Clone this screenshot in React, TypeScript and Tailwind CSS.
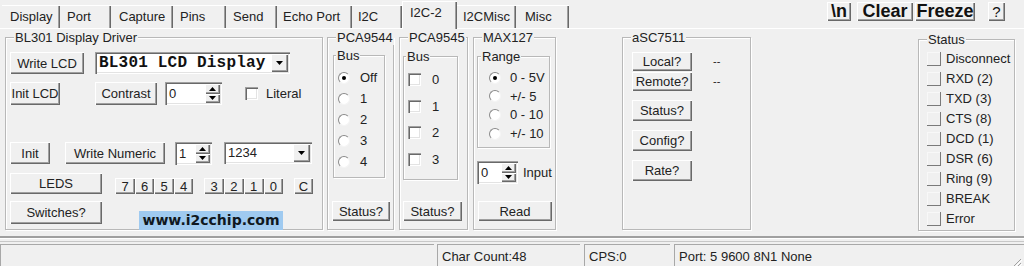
import React from "react";

const raised =
  "bg-[#f0f0f0] shadow-[inset_1px_1px_0_#ffffff,inset_-1px_-1px_0_#696969,inset_-2px_-2px_0_#a0a0a0]";
const sunken =
  "bg-white shadow-[inset_1px_1px_0_#a0a0a0,inset_2px_2px_0_#696969,inset_-1px_-1px_0_#ffffff,inset_-2px_-2px_0_#e3e3e3]";

type P = { className?: string; children?: React.ReactNode };

function Btn({ className = "", children }: P) {
  return (
    <div className={`flex shrink-0 items-center justify-center leading-[15px] ${raised} ${className}`}>
      {children}
    </div>
  );
}

function Group({
  label,
  className = "",
  labelClass = "left-[8px]",
  children,
}: P & { label: string; labelClass?: string }) {
  return (
    <div
      className={`relative shrink-0 border border-[#b8b8b8] shadow-[inset_1px_1px_0_#ffffff,1px_1px_0_#ffffff] ${className}`}
    >
      <span className={`absolute -top-[8px] whitespace-nowrap bg-[#f0f0f0] px-px leading-[15px] ${labelClass}`}>
        {label}
      </span>
      {children}
    </div>
  );
}

function DownTri() {
  return (
    <svg width="7" height="4" viewBox="0 0 7 4">
      <path d="M0 0h7L3.5 4z" fill="#000" />
    </svg>
  );
}
function UpTri() {
  return (
    <svg width="7" height="4" viewBox="0 0 7 4">
      <path d="M0 4h7L3.5 0z" fill="#000" />
    </svg>
  );
}

function Combo({ className = "", text, textClass = "" }: P & { text: string; textClass?: string }) {
  return (
    <div className={`flex shrink-0 items-center p-[2px] ${sunken} ${className}`}>
      <span className={`flex-1 whitespace-nowrap pl-[2px] ${textClass}`}>{text}</span>
      <div className={`flex h-full w-[17px] items-center justify-center ${raised}`}>
        <DownTri />
      </div>
    </div>
  );
}

function Spin({ className = "", value }: P & { value: string }) {
  return (
    <div className={`flex shrink-0 items-center p-[2px] ${sunken} ${className}`}>
      <span className="flex-1 pl-[2px] leading-[15px]">{value}</span>
      <div className="flex h-full w-[15px] flex-col">
        <div className={`flex flex-1 items-center justify-center ${raised}`}>
          <UpTri />
        </div>
        <div className={`flex flex-1 items-center justify-center ${raised}`}>
          <DownTri />
        </div>
      </div>
    </div>
  );
}

function Radio({ checked = false }: { checked?: boolean }) {
  return (
    <div className="flex h-[12px] w-[12px] shrink-0 items-center justify-center rounded-full border border-t-[#8a8a8a] border-l-[#8a8a8a] border-r-[#f4f4f4] border-b-[#f4f4f4] bg-white">
      {checked && <div className="h-[4px] w-[4px] rounded-full bg-black" />}
    </div>
  );
}

function Check() {
  return <div className={`h-[13px] w-[13px] shrink-0 ${sunken}`} />;
}

function Led() {
  return (
    <div className="h-[14px] w-[14px] shrink-0 bg-[#f0f0f0] shadow-[inset_-1px_-1px_0_#7a7a7a,inset_1px_1px_0_#f8f8f8]" />
  );
}

const tabs: { label: string; w: string; pl: string }[] = [
  { label: "Display", w: "w-[58px]", pl: "pl-[8px]" },
  { label: "Port", w: "w-[51px]", pl: "pl-[7px]" },
  { label: "Capture", w: "w-[62px]", pl: "pl-[8px]" },
  { label: "Pins", w: "w-[53px]", pl: "pl-[7px]" },
  { label: "Send", w: "w-[51px]", pl: "pl-[7px]" },
  { label: "Echo Port", w: "w-[75px]", pl: "pl-[6px]" },
  { label: "I2C", w: "w-[50px]", pl: "pl-[6px]" },
];
const tabs2: { label: string; w: string; pl: string }[] = [
  { label: "I2CMisc", w: "w-[59px]", pl: "pl-[6px]" },
  { label: "Misc", w: "w-[53px]", pl: "pl-[9px]" },
];

const tabCls =
  "flex h-[23px] shrink-0 items-center whitespace-nowrap bg-[#f0f0f0] shadow-[inset_0_1px_0_#ffffff,inset_-1px_0_0_#696969,inset_-2px_0_0_#a0a0a0]";

const statusItems = [
  "Disconnect",
  "RXD (2)",
  "TXD (3)",
  "CTS (8)",
  "DCD (1)",
  "DSR (6)",
  "Ring (9)",
  "BREAK",
  "Error",
];

export default function App() {
  return (
    <div className="h-[266px] w-[1024px] overflow-hidden bg-[#f0f0f0] text-[13px] text-[#222222] [font-family:Liberation_Sans,Arial,sans-serif]">
      {/* Top bar: tabs + buttons */}
      <div className="flex h-[28px] items-end">
        <div className="flex items-end pl-[2px]">
          {tabs.map((t) => (
            <div key={t.label} className={`${tabCls} ${t.w} ${t.pl}`}>
              {t.label}
            </div>
          ))}
          <div className="mb-[-1px] flex h-[28px] w-[55px] shrink-0 items-start bg-[#f0f0f0] pl-[8px] pt-[4px] leading-[15px] shadow-[inset_1px_1px_0_#ffffff,inset_-1px_0_0_#696969,inset_-2px_0_0_#a0a0a0]">
            I2C-2
          </div>
          {tabs2.map((t) => (
            <div key={t.label} className={`${tabCls} ${t.w} ${t.pl}`}>
              {t.label}
            </div>
          ))}
        </div>
        <div className="flex-1" />
        <div className="mb-[7px] flex items-center text-[18px] font-bold leading-[19px] text-[#111111]">
          <Btn className="h-[19px] w-[24px]">\n</Btn>
          <Btn className="ml-[6px] h-[19px] w-[56px]">Clear</Btn>
          <Btn className="ml-[2px] h-[19px] w-[60px]">Freeze</Btn>
          <Btn className="ml-[13px] mr-[19px] h-[19px] w-[17px] text-[15px] font-normal">?</Btn>
        </div>
      </div>

      {/* Tab page */}
      <div className="flex h-[208px] items-start border-t border-white pl-[5px] pt-[8px]">
        {/* BL301 */}
        <Group label="BL301 Display Driver" className="h-[193px] w-[318px]">
          <div className="flex flex-col">
            <div className="mt-[14px] flex items-start">
              <Btn className="ml-[4px] h-[22px] w-[74px]">Write LCD</Btn>
              <Combo
                className="ml-[11px] h-[22px] w-[195px]"
                text="BL301 LCD Display"
                textClass="text-[16px] font-bold tracking-[0.2px] text-[#111111] [font-family:Liberation_Mono,Courier_New,monospace]"
              />
            </div>
            <div className="mt-[8px] flex items-start">
              <Btn className="ml-[4px] h-[23px] w-[50px]">Init LCD</Btn>
              <Btn className="ml-[35px] h-[23px] w-[62px]">Contrast</Btn>
              <Spin className="ml-[8px] h-[23px] w-[57px]" value="0" />
              <div className="ml-[23px] mt-[4px] flex items-center">
                <Check />
                <span className="ml-[8px] leading-[15px]">Literal</span>
              </div>
            </div>
            <div className="mt-[37px] flex items-start">
              <Btn className="ml-[4px] h-[22px] w-[40px]">Init</Btn>
              <Btn className="ml-[15px] h-[22px] w-[100px]">Write Numeric</Btn>
              <Spin className="ml-[10px] h-[23px] w-[37px]" value="1" />
              <Combo className="ml-[12px] h-[22px] w-[88px]" text="1234" />
            </div>
            <div className="mt-[8px] flex items-start">
              <Btn className="ml-[4px] h-[21px] w-[92px]">LEDS</Btn>
              <div className="ml-[13px] mt-[5px] flex">
                {["7", "6", "5", "4"].map((d, i) => (
                  <Btn key={d} className={`h-[16px] ${i % 2 === 0 ? "w-[20px]" : "w-[19px]"}`}>
                    {d}
                  </Btn>
                ))}
              </div>
              <div className="ml-[11px] mt-[5px] flex">
                {["3", "2", "1", "0"].map((d, i) => (
                  <Btn key={d} className={`h-[16px] ${i % 2 === 0 ? "w-[20px]" : "w-[19.5px]"}`}>
                    {d}
                  </Btn>
                ))}
              </div>
              <Btn className="ml-[11px] mt-[5px] h-[16px] w-[19px]">C</Btn>
            </div>
            <div className="mt-[7px] flex items-start">
              <Btn className="ml-[4px] h-[23px] w-[92px]">Switches?</Btn>
              <div className="ml-[37px] mt-[10px] flex h-[19px] w-[144px] items-center justify-center bg-[#9fcaf0] text-[14px] font-bold leading-[19px] text-[#101820] [font-family:DejaVu_Sans,Verdana,sans-serif]">
                www.i2cchip.com
              </div>
            </div>
          </div>
        </Group>

        {/* PCA9544 */}
        <Group label="PCA9544" className="ml-[4px] h-[193px] w-[67px]">
          <div className="flex flex-col">
            <Group label="Bus" labelClass="left-[2px]" className="ml-[5px] mt-[17px] h-[123px] w-[52px]">
              <div className="mt-[14px] flex flex-col gap-[6px]">
                {["Off", "1", "2", "3", "4"].map((l, i) => (
                  <div key={l} className="ml-[4px] flex h-[15px] items-center">
                    <Radio checked={i === 0} />
                    <span className="ml-[10px] leading-[15px]">{l}</span>
                  </div>
                ))}
              </div>
            </Group>
            <Btn className="ml-[4px] mt-[23px] h-[20px] w-[58px]">Status?</Btn>
          </div>
        </Group>

        {/* PCA9545 */}
        <Group label="PCA9545" className="ml-[5px] h-[193px] w-[69px]">
          <div className="flex flex-col">
            <Group label="Bus" labelClass="left-[2px]" className="ml-[3px] mt-[18px] h-[124px] w-[55px]">
              <div className="mt-[15px] flex flex-col gap-[11.6px]">
                {["0", "1", "2", "3"].map((l) => (
                  <div key={l} className="ml-[4px] flex h-[15px] items-center">
                    <Check />
                    <span className="ml-[11px] leading-[15px]">{l}</span>
                  </div>
                ))}
              </div>
            </Group>
            <Btn className="ml-[3px] mt-[21px] h-[20px] w-[59px]">Status?</Btn>
          </div>
        </Group>

        {/* MAX127 */}
        <Group label="MAX127" className="ml-[5px] h-[193px] w-[83px]">
          <div className="flex flex-col">
            <Group label="Range" labelClass="left-[3px]" className="ml-[3px] mt-[18px] h-[92px] w-[73px]">
              <div className="mt-[13px] flex flex-col gap-[3.7px]">
                {["0 - 5V", "+/- 5", "0 - 10", "+/- 10"].map((l, i) => (
                  <div key={l} className="ml-[11px] flex h-[15px] items-center">
                    <Radio checked={i === 0} />
                    <span className="ml-[9px] whitespace-nowrap leading-[15px]">{l}</span>
                  </div>
                ))}
              </div>
            </Group>
            <div className="ml-[3px] mt-[13px] flex items-center">
              <Spin className="h-[23px] w-[41px]" value="0" />
              <span className="ml-[5px] leading-[15px]">Input</span>
            </div>
            <Btn className="ml-[4px] mt-[17px] h-[20px] w-[74px]">Read</Btn>
          </div>
        </Group>

        {/* aSC7511 */}
        <Group label="aSC7511" className="ml-[66px] h-[193px] w-[129px]">
          <div className="flex flex-col">
            <div className="mt-[14px] flex items-center">
              <Btn className="ml-[9px] h-[19px] w-[60px]">Local?</Btn>
              <span className="ml-[21px] text-[11px] leading-[15px]">--</span>
            </div>
            <div className="mt-px flex items-center">
              <Btn className="ml-[9px] h-[19px] w-[60px]">Remote?</Btn>
              <span className="ml-[21px] text-[11px] leading-[15px]">--</span>
            </div>
            <Btn className="ml-[9px] mt-[9px] h-[21px] w-[60px]">Status?</Btn>
            <Btn className="ml-[9px] mt-[9px] h-[21px] w-[60px]">Config?</Btn>
            <Btn className="ml-[9px] mt-[9px] h-[21px] w-[60px]">Rate?</Btn>
          </div>
        </Group>

        {/* Status */}
        <Group label="Status" className="ml-[167px] mt-[2px] h-[192px] w-[97px]">
          <div className="mt-[11px] flex flex-col gap-[5px]">
            {statusItems.map((s) => (
              <div key={s} className="ml-[8px] flex h-[15px] items-center">
                <Led />
                <span className="ml-[5px] whitespace-nowrap leading-[15px]">{s}</span>
              </div>
            ))}
          </div>
        </Group>
      </div>

      {/* Status bar */}
      <div className="h-[3px] border-t-2 border-b border-t-[#a0a0a0] border-b-white" />
      <div className="mt-[2px] flex h-[27px] border-t border-[#c8c8c8] pt-[2px]">
        <div className="h-full w-[434px] border-l border-t border-[#a8a8a8]" />
        <div className="ml-[3px] flex h-full w-[143px] items-center border-l border-t border-[#a8a8a8] pl-[4px]">
          Char Count:48
        </div>
        <div className="ml-[4px] flex h-full w-[86px] items-center border-l border-t border-[#a8a8a8] pl-[4px]">
          CPS:0
        </div>
        <div className="ml-[4px] flex h-full flex-1 items-center justify-between border-l border-t border-[#a8a8a8] pl-[4px]">
          <span>Port: 5 9600 8N1 None</span>
          <svg width="11" height="11" viewBox="0 0 11 11" className="mr-[2px] self-end">
            <path d="M10 2L2 10M10 6L6 10" stroke="#a0a0a0" strokeWidth="1" />
            <path d="M11 3L3 11M11 7L7 11" stroke="#ffffff" strokeWidth="1" />
          </svg>
        </div>
      </div>
    </div>
  );
}
